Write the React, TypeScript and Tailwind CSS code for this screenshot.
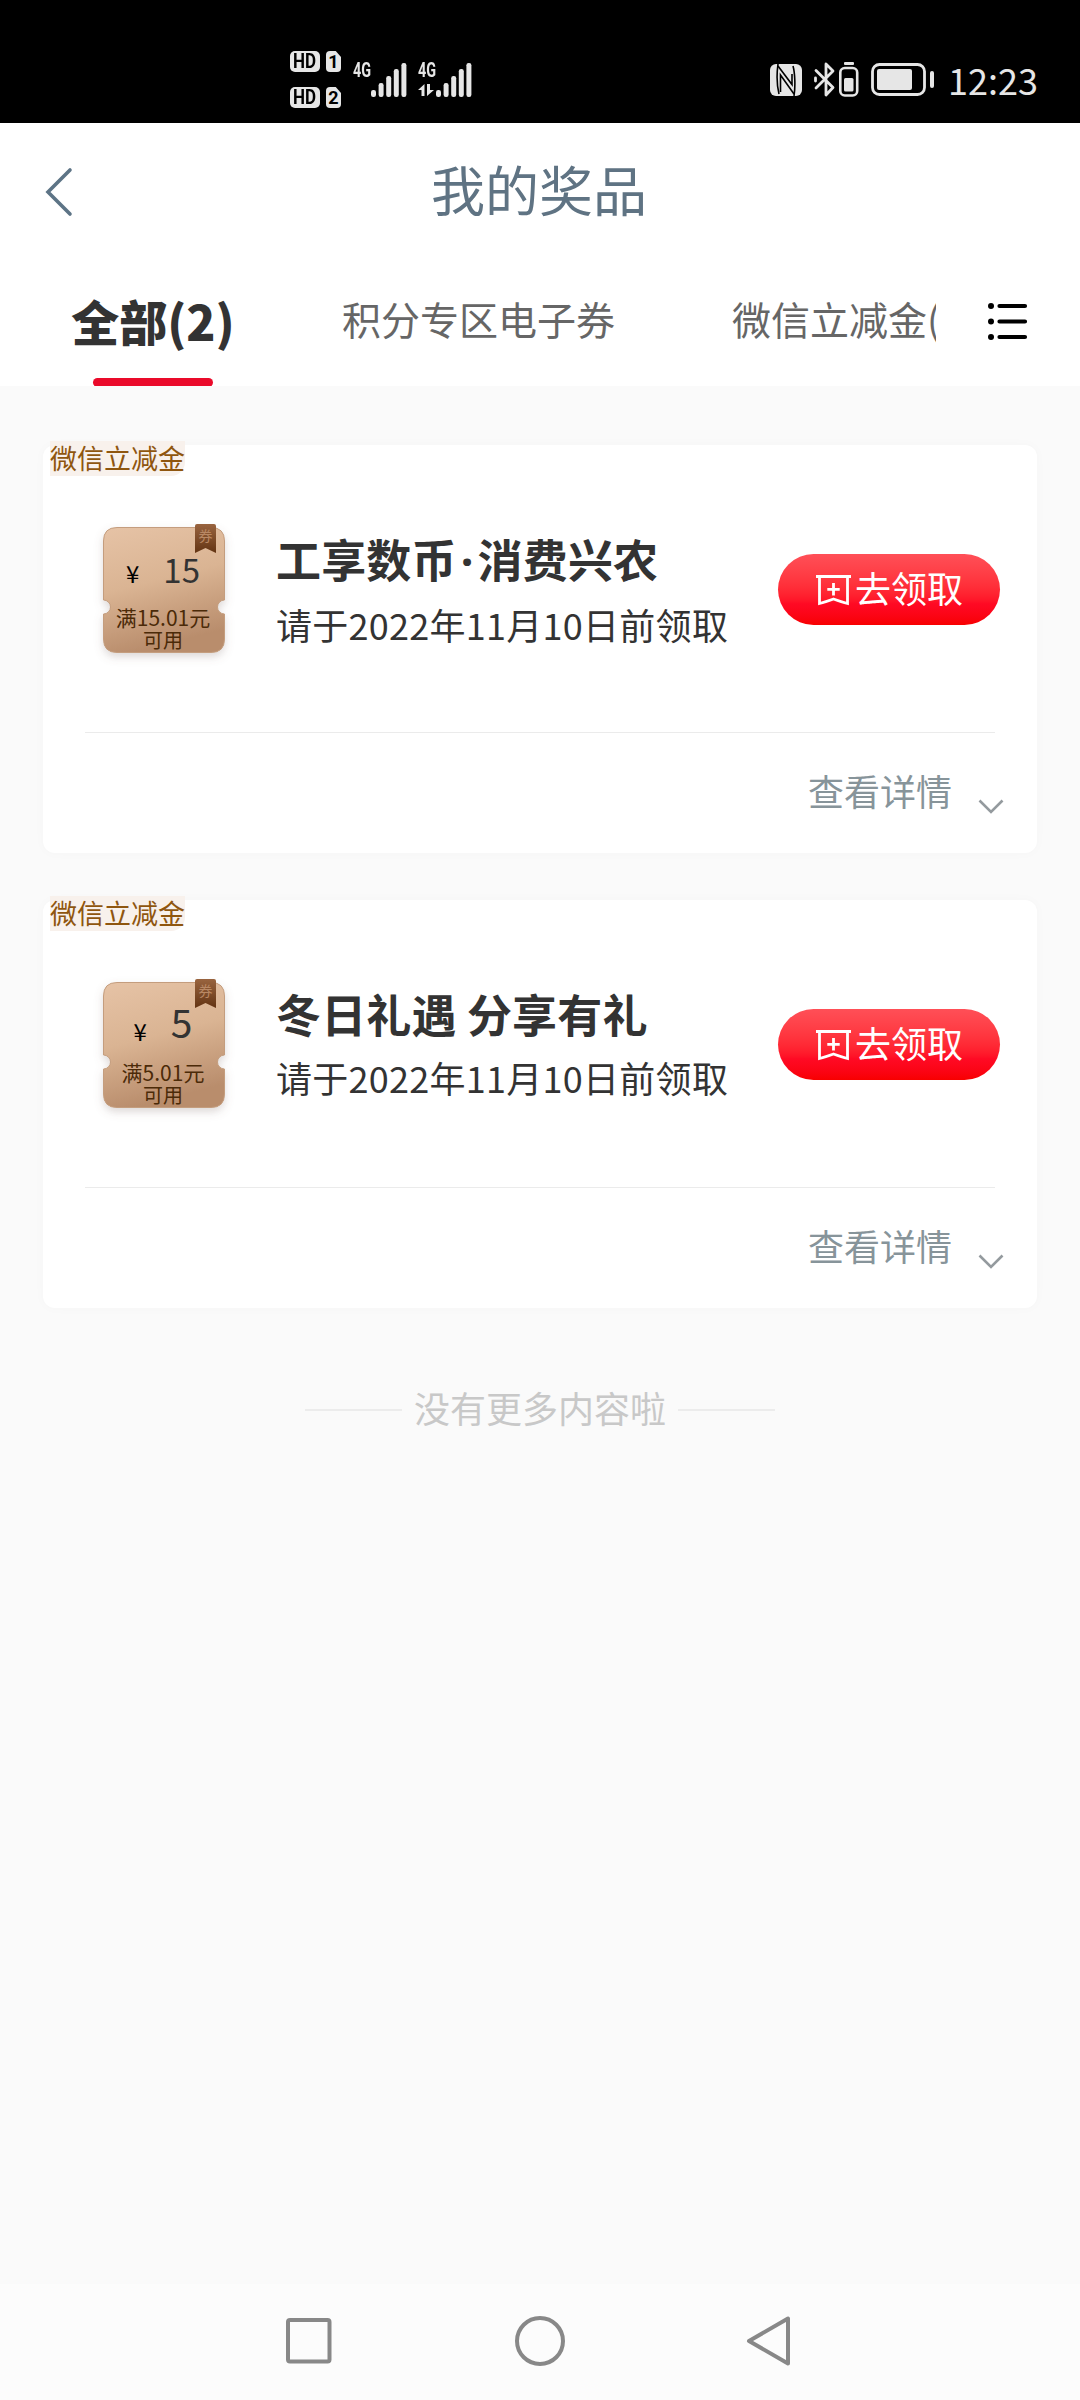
import React from "react";

type Prize = {
  amount: string;
  amountClass: string;
  limit: string;
  title: React.ReactNode;
};

const prizes: Prize[] = [
  {
    amount: "15",
    amountClass: "text-[33px] ml-[24px]",
    limit: "满15.01元",
    title: (
      <>
        工享数币<span className="inline-block w-[21px] text-center font-['Noto_Sans']">·</span>消费兴农
      </>
    ),
  },
  { amount: "5", amountClass: "text-[39px] ml-[24px] relative -top-[3px]", limit: "满5.01元", title: "冬日礼遇 分享有礼" },
];

function Signal() {
  return (
    <svg width="36" height="34" viewBox="0 0 36 34" fill="#e6e6e6">
      <rect x="0" y="27" width="5" height="7" rx="2.2" />
      <rect x="7.6" y="20" width="5" height="14" rx="2.2" />
      <rect x="15.2" y="13" width="5" height="21" rx="2.2" />
      <rect x="22.8" y="6" width="5" height="28" rx="2.2" />
      <rect x="30.4" y="0" width="5" height="34" rx="2.2" />
    </svg>
  );
}

function HdBadge({ sim }: { sim: string }) {
  return (
    <div className="flex gap-[6px]">
      <div className="flex h-[21px] w-[30px] items-center justify-center rounded-[5px] bg-[#e6e6e6] font-['Roboto'] text-[20px] font-bold leading-[21px] text-black">
        <span className="inline-block scale-x-[0.85]">HD</span>
      </div>
      <div className="flex h-[21px] w-[15px] items-center justify-center rounded-[4px] bg-[#e6e6e6] font-['Roboto'] text-[18px] font-bold leading-[21px] text-black [clip-path:polygon(0_0,65%_0,100%_28%,100%_100%,0_100%)]">
        {sim}
      </div>
    </div>
  );
}

function NetLabel() {
  return (
    <span className="block w-[18px] whitespace-nowrap font-['Roboto'] text-[20px] font-bold leading-[20px] text-[#e6e6e6]">
      <span className="inline-block origin-left scale-x-[0.72]">4G</span>
    </span>
  );
}

function StatusBar() {
  return (
    <div className="flex h-[123px] items-start bg-black">
      <div className="ml-[290px] mt-[51px] flex flex-col gap-[15px]">
        <HdBadge sim="1" />
        <HdBadge sim="2" />
      </div>
      <div className="ml-[12px] mt-[60px]">
        <NetLabel />
      </div>
      <div className="mt-[63px]">
        <Signal />
      </div>
      <div className="ml-[11px] mt-[60px] w-[18px]">
        <NetLabel />
        <svg className="mt-[4px]" width="16" height="12" viewBox="0 0 16 12" fill="#e6e6e6">
          <path d="M6.500 0v12H3.500V6H0zM9 0h3v6h4l-7 6z" />
        </svg>
      </div>
      <div className="mt-[63px]">
        <Signal />
      </div>
      <svg className="ml-[298px] mt-[64px]" width="32" height="32" viewBox="0 0 32 32">
        <rect width="32" height="32" rx="6" fill="#e6e6e6" />
        <path d="M8 0C6.800 9 7 22 9 30M24 32C25.500 23 25 9 23 2" fill="none" stroke="#000" strokeWidth="1.600" />
        <path d="M8 2L22 20.500V10M10.500 28V11L24 30" fill="none" stroke="#000" strokeWidth="1.600" />
      </svg>
      <svg className="ml-[12px] mt-[62px]" width="21" height="35" viewBox="0 0 21 35" fill="none" stroke="#e6e6e6" strokeWidth="2.800" strokeLinejoin="round" strokeLinecap="round">
        <path d="M2 8.500L19 25.500L12 33V2L19 9L2 26" />
        <path d="M1.500 16v3" />
      </svg>
      <svg className="ml-[4px] mt-[62px]" width="20" height="35" viewBox="0 0 20 35">
        <rect x="5" y="0" width="10" height="3" rx="1" fill="#e6e6e6" />
        <rect x="1.300" y="6" width="16.900" height="27.500" rx="4.500" fill="none" stroke="#e6e6e6" strokeWidth="2.600" />
        <rect x="5" y="16" width="9.500" height="13.500" rx="1.500" fill="#e6e6e6" />
      </svg>
      <svg className="ml-[12px] mt-[63px]" width="64" height="33" viewBox="0 0 64 33">
        <rect x="1.500" y="1.500" width="52" height="30" rx="7" fill="none" stroke="#e6e6e6" strokeWidth="2.800" />
        <rect x="6" y="6" width="35" height="21" rx="2" fill="#e6e6e6" />
        <rect x="59" y="8" width="4" height="17" rx="2" fill="#e6e6e6" />
      </svg>
      <span className="ml-[13px] mt-[59px] text-[36px] leading-[40px] text-[#e6e6e6]">12:23</span>
    </div>
  );
}

function Header() {
  return (
    <div className="h-[263px] bg-white">
      <div className="relative flex h-[136px] items-center justify-center">
        <svg className="absolute left-[45px] top-[44px]" width="28" height="50" viewBox="0 0 28 50" fill="none" stroke="#5d7486" strokeWidth="3.600" strokeLinecap="round">
          <path d="M25 3L3 25L25 47" />
        </svg>
        <h1 className="-mt-[5px] -ml-[2px] text-[54px] leading-[60px] text-[#5f7383]">我的奖品</h1>
      </div>
      <div className="flex h-[127px]">
        <div className="flex w-[936px] overflow-hidden whitespace-nowrap">
          <div className="flex w-[306px] shrink-0 flex-col items-center">
            <span className="mt-[31px] text-[48px] font-black leading-[60px] text-[#333]">全部(2)</span>
            <div className="mt-[28px] h-[9px] w-[120px] shrink-0 rounded-full bg-[#ea0a2a]" />
          </div>
          <span className="ml-[36px] mt-[31px] shrink-0 text-[39px] leading-[56px] text-[#666]">积分专区电子券</span>
          <span className="ml-[117px] mt-[31px] shrink-0 text-[39px] leading-[56px] text-[#666]">微信立减金(1)</span>
        </div>
        <svg className="ml-[51px] mt-[43px]" width="42" height="40" viewBox="0 0 42 40" fill="none" stroke="#000" strokeWidth="4.200" strokeLinecap="round">
          <path d="M12.500 4H38M12.500 19.500H38M12.500 35H38" />
          <path d="M4 4h0.010M4 19.500h0.010M4 35h0.010" strokeWidth="6" />
        </svg>
      </div>
    </div>
  );
}

function Ticket({ prize }: { prize: Prize }) {
  return (
    <div className="relative h-[126px] w-[122px] shrink-0">
      <svg className="absolute -left-[16px] -top-[16px]" width="154" height="164" viewBox="-16 -16 154 164">
        <defs>
          <linearGradient id="ticketFill" x1="0" y1="0" x2="0.25" y2="1">
            <stop offset="0" stopColor="#e6c3a6" />
            <stop offset="0.5" stopColor="#dab493" />
            <stop offset="1" stopColor="#b98d6c" />
          </linearGradient>
          <linearGradient id="ribbonFill" x1="0" y1="0" x2="0" y2="1">
            <stop offset="0" stopColor="#99643f" />
            <stop offset="1" stopColor="#633413" />
          </linearGradient>
          <filter id="ticketShadow" x="-20%" y="-20%" width="140%" height="140%">
            <feDropShadow dx="0" dy="4" stdDeviation="4" floodColor="#7a6a60" floodOpacity="0.25" />
          </filter>
        </defs>
        <path
          d="M14 0.500H108Q121.500 0.500 121.500 14V73A7 7 0 0 0 121.500 87V112Q121.500 125.500 108 125.500H14Q0.500 125.500 0.500 112V87A7 7 0 0 0 0.500 73V14Q0.500 0.500 14 0.500Z"
          fill="url(#ticketFill)"
          stroke="#c49d7e"
          strokeWidth="1"
          filter="url(#ticketShadow)"
        />
        <path d="M94 -3H111Q113 -3 113 -1V26L102.500 21L92 26V-1Q92 -3 94 -3Z" fill="url(#ribbonFill)" />
      </svg>
      <span className="absolute left-[92px] top-0 w-[21px] text-center text-[14px] leading-[16px] text-[#b98864]">券</span>
      <div className="relative -left-px flex h-[79px] items-baseline justify-center pt-[18px] text-[#333]">
        <span className="text-[24px] leading-[48px] text-black">¥</span>
        <span className={"leading-[48px] " + prize.amountClass}>{prize.amount}</span>
      </div>
      <div className="relative -left-px whitespace-nowrap text-center text-[21px] leading-[22px] text-[#4b2a08]">
        {prize.limit}
        <br />
        <span className="text-[20px]">可用</span>
      </div>
    </div>
  );
}

function PrizeCard({ prize }: { prize: Prize }) {
  return (
    <section className="mx-[43px] flex h-[408px] flex-col rounded-[12px] bg-white shadow-[0_0_12px_rgba(0,0,0,0.025)]">
      <div className="-mt-[4px] ml-[7px] h-[35px] w-[135px] whitespace-nowrap rounded-br-[14px] bg-[#f8f1ec] pt-[2px] text-[27px] leading-[30px] text-[#8f560f]">
        微信立减金
      </div>
      <div className="mt-[51px] flex h-[126px] pl-[60px] pr-[37px]">
        <Ticket prize={prize} />
        <div className="ml-[51px] flex flex-col">
          <h2 className="mt-[5px] whitespace-nowrap text-[45px] font-bold leading-[54px] tracking-[0.150px] text-[#333]">{prize.title}</h2>
          <p className="mt-[11px] whitespace-nowrap text-[36px] leading-[50px] tracking-[0.270px] text-[#333]">请于2022年11月10日前领取</p>
        </div>
        <button className="ml-auto mt-[27px] flex h-[71px] w-[222px] items-center rounded-full bg-linear-to-b from-[#ff4f57] via-[#ff0a24] via-70% to-[#f80000] pl-[38px] text-[36px] text-white">
          <svg width="36" height="32" viewBox="0 0 36 32" fill="none" stroke="#fff" strokeWidth="2.800">
            <path d="M0 2.500H35M3.500 2.500V29.500Q9 28 17.500 25Q26 28 31.500 29.500V2.500M17.500 9V21.500M11.300 15.300H23.700" />
          </svg>
          <span className="-mt-[5px] ml-[3px] leading-[40px]">去领取</span>
        </button>
      </div>
      <div className="ml-[42px] mr-[42px] mt-[79px] h-px bg-[#ebebeb]" />
      <div className="flex pr-[33px]">
        <span className="ml-auto mt-[32px] text-[36px] leading-[50px] text-[#87949a]">查看详情</span>
        <svg className="ml-[26px] mt-[66px]" width="26" height="16" viewBox="0 0 26 16" fill="none" stroke="#949a9e" strokeWidth="2.600">
          <path d="M1.500 1.500L13 13L24.500 1.500" />
        </svg>
      </div>
    </section>
  );
}

function NavBar() {
  return (
    <nav className="flex h-[116px] items-start bg-[#fcfcfc] pt-[30px]">
      <svg className="ml-[284px]" width="508" height="56" viewBox="0 0 508 56" fill="none" stroke="#888" strokeWidth="4" strokeLinejoin="round">
        <rect x="4" y="6" width="41.500" height="41.500" rx="2" />
        <circle cx="256" cy="27" r="23" />
        <path d="M504 4.500V49.500L465 27Z" />
      </svg>
    </nav>
  );
}

export default function App() {
  return (
    <div className="flex h-[2400px] w-[1080px] flex-col overflow-hidden bg-[#fafafa] font-['Noto_Sans_CJK_SC',sans-serif]">
      <StatusBar />
      <Header />
      <main className="flex flex-1 flex-col gap-[47px] pt-[59px]">
        {prizes.map((p) => (
          <PrizeCard key={p.amount} prize={p} />
        ))}
        <div className="mt-[27px] flex items-center justify-center gap-[12px] text-[36px] leading-[50px] text-[#c8c8c8]">
          <span className="mt-[6px] h-[2px] w-[97px] bg-[#ececec]" />
          没有更多内容啦
          <span className="mt-[6px] h-[2px] w-[97px] bg-[#ececec]" />
        </div>
      </main>
      <NavBar />
    </div>
  );
}
